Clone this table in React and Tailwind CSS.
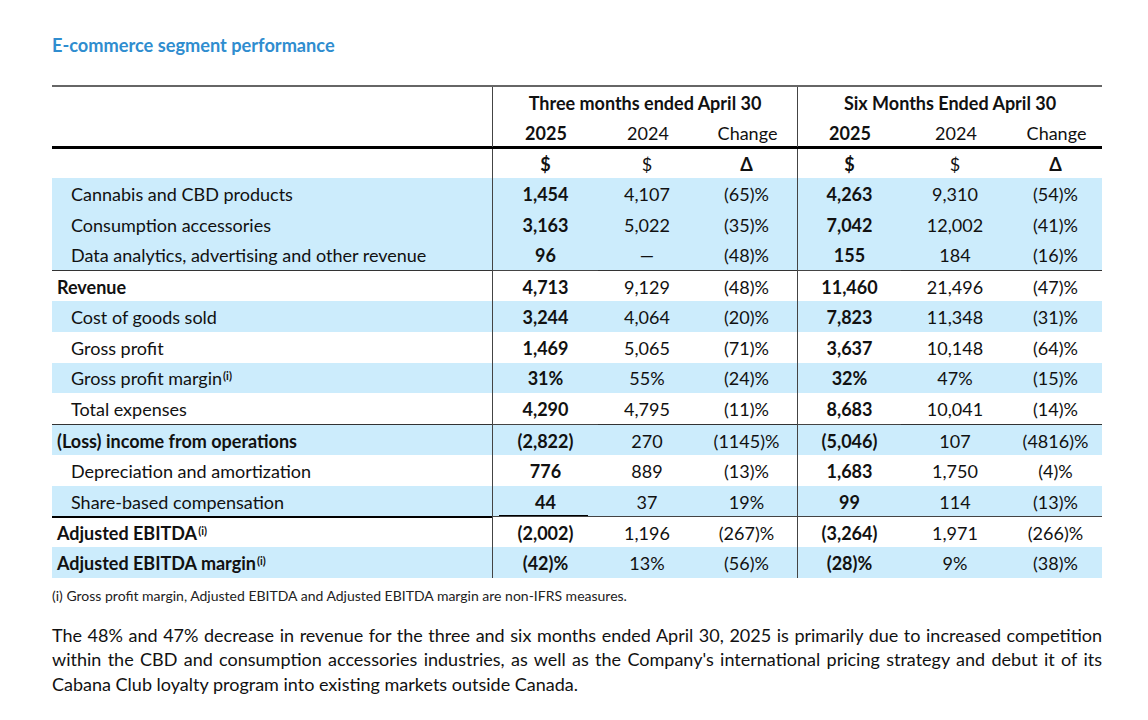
import React from 'react';

const rows = [
    { label: 'Cannabis and CBD products', indent: true, blue: true, vals: ['1,454', '4,107', '(65)%', '4,263', '9,310', '(54)%'] },
    { label: 'Consumption accessories', indent: true, blue: true, vals: ['3,163', '5,022', '(35)%', '7,042', '12,002', '(41)%'] },
    { label: 'Data analytics, advertising and other revenue', indent: true, blue: true, vals: ['96', '—', '(48)%', '155', '184', '(16)%'] },
    { label: 'Revenue', bold: true, line: 'thin', vals: ['4,713', '9,129', '(48)%', '11,460', '21,496', '(47)%'] },
    { label: 'Cost of goods sold', indent: true, blue: true, vals: ['3,244', '4,064', '(20)%', '7,823', '11,348', '(31)%'] },
    { label: 'Gross profit', indent: true, vals: ['1,469', '5,065', '(71)%', '3,637', '10,148', '(64)%'] },
    { label: 'Gross profit margin', sup: true, indent: true, blue: true, vals: ['31%', '55%', '(24)%', '32%', '47%', '(15)%'] },
    { label: 'Total expenses', indent: true, vals: ['4,290', '4,795', '(11)%', '8,683', '10,041', '(14)%'] },
    { label: '(Loss) income from operations', bold: true, blue: true, line: 'thin', vals: ['(2,822)', '270', '(1145)%', '(5,046)', '107', '(4816)%'] },
    { label: 'Depreciation and amortization', indent: true, vals: ['776', '889', '(13)%', '1,683', '1,750', '(4)%'] },
    { label: 'Share-based compensation', indent: true, blue: true, underline: true, vals: ['44', '37', '19%', '99', '114', '(13)%'] },
    { label: 'Adjusted EBITDA', sup: true, bold: true, line: 'thick', vals: ['(2,002)', '1,196', '(267)%', '(3,264)', '1,971', '(266)%'] },
    { label: 'Adjusted EBITDA margin', sup: true, bold: true, blue: true, vals: ['(42)%', '13%', '(56)%', '(28)%', '9%', '(38)%'] },
];

// label | three months (2025, 2024, change) | six months (2025, 2024, change)
const grid = 'grid grid-cols-[440px_106px_98px_101px_104px_108px_93px]';
const threeCols = 'grid grid-cols-[106px_98px_101px]';
const sixCols = 'grid grid-cols-[104px_108px_93px]';

function Sup() {
    return <sup className="text-[11px] font-bold relative -top-[3px] ml-[1px]">(i)</sup>;
}

function Row({ row }) {
    const bg = row.blue ? 'bg-[#ccecfc]' : 'bg-white';
    const topLine = row.line === 'thin' ? 'border-t-[1.5px] border-[#333]' : '';
    return (
        <div className={`${grid} h-[30.77px] ${bg}`}>
            <div className={`flex items-center pt-[2px] ${row.indent ? 'pl-[19px]' : 'pl-[5px]'} ${row.bold ? 'font-bold' : ''} ${topLine} ${row.line === 'thick' ? 'border-t-2 border-black' : ''}`}>
                <span>{row.label}</span>
                {row.sup && <Sup />}
            </div>
            {row.vals.map((v, i) => (
                <div
                    key={i}
                    className={`relative flex items-center justify-center pt-[2px] ${i === 0 || i === 3 ? 'border-l border-[#444] font-bold' : ''} ${topLine} ${row.line === 'thick' ? 'border-t border-t-[#444]' : ''}`}
                >
                    {v}
                    {row.underline && i === 0 && (
                        <div className="absolute left-[6px] right-[10px] bottom-[-1px] h-[2px] bg-black" />
                    )}
                </div>
            ))}
        </div>
    );
}

function GroupHeader({ title, cols }) {
    return (
        <div className="col-span-3 border-l border-[#444] flex flex-col">
            <div className="h-[31px] flex items-end justify-center font-bold pb-[1px]">{title}</div>
            <div className={`${cols} flex-1 items-center text-center pt-[2px]`}>
                <span className="font-bold">2025</span>
                <span>2024</span>
                <span>Change</span>
            </div>
        </div>
    );
}

export default function App() {
    return (
        <div className="w-[1148px] h-[720px] bg-white text-black px-[52px] pt-[33px]" style={{ fontFamily: 'Lato, "Open Sans", sans-serif' }}>
            <h2 className="text-[18.2px] font-bold text-[#2f8dcf] leading-[24px]">E-commerce segment performance</h2>

            <div className="mt-[28px] w-[1050px] text-[18px] text-[#111]">
                {/* Header */}
                <div className={`${grid} border-t-2 border-[#666] border-b-[3px] border-b-black h-[64px]`}>
                    <div />
                    <GroupHeader title="Three months ended April 30" cols={threeCols} />
                    <GroupHeader title="Six Months Ended April 30" cols={sixCols} />
                </div>

                {/* Units */}
                <div className={`${grid} h-[29px]`}>
                    <div />
                    {['$', '$', 'Δ', '$', '$', 'Δ'].map((u, i) => (
                        <div key={i} className={`flex items-center justify-center pt-[2px] ${i === 0 || i === 3 ? 'border-l border-[#444] font-bold' : ''} ${i === 2 || i === 5 ? 'font-bold' : ''}`}>
                            {u}
                        </div>
                    ))}
                </div>

                {rows.map((r) => (
                    <Row key={r.label} row={r} />
                ))}
            </div>

            <p className="mt-[8px] text-[14px] leading-[20px] text-[#222]">
                (i) Gross profit margin, Adjusted EBITDA and Adjusted EBITDA margin are non-IFRS measures.
            </p>

            <div className="mt-[17px] w-[1050px] text-[18px] leading-[24.5px] text-[#111]">
                <div className="text-justify [text-align-last:justify]">
                    The 48% and 47% decrease in revenue for the three and six months ended April 30, 2025 is primarily due to increased competition
                </div>
                <div className="text-justify [text-align-last:justify]">
                    within the CBD and consumption accessories industries, as well as the Company's international pricing strategy and debut it of its
                </div>
                <div>Cabana Club loyalty program into existing markets outside Canada.</div>
            </div>
        </div>
    );
}
